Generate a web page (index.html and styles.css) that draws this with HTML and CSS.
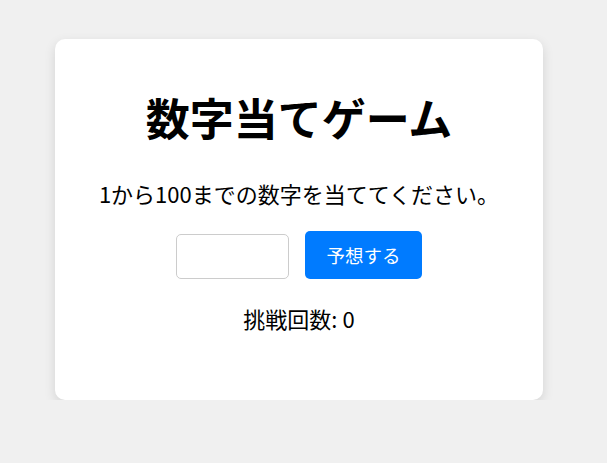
FILE: index.html
```html
<!DOCTYPE html>
<html lang="ja">
<head>
<meta charset="utf-8">
<title>数字当てゲーム</title>
<link rel="stylesheet" href="styles.css">
</head>
<body>
<div class="card">
  <h1 class="title">数字当てゲーム</h1>
  <p class="lead">1から100までの数字を当ててください。</p>
  <div class="form">
    <input class="guess" type="number">
    <button class="submit">予想する</button>
  </div>
  <p class="result"></p>
  <p class="count">挑戦回数: 0</p>
</div>
</body>
</html>
```
FILE: styles.css
```css
html, body {
  margin: 0;
  padding: 0;
}
body {
  background: #f0f0f0;
  font-family: "Noto Sans CJK JP", "Noto Sans", sans-serif;
  color: #000;
  padding: 39px 0 0 55px;
}
.card {
  box-sizing: border-box;
  width: 488px;
  height: 361px;
  background: #fff;
  border-radius: 10px;
  box-shadow: 0 4px 12px rgba(0, 0, 0, 0.12);
  padding: 20px;
  text-align: center;
}
.title {
  font-size: 44px;
  font-weight: 700;
  margin: 26px 0 28px;
}
.lead {
  font-size: 22px;
  margin: 0 0 22px;
}
.form {
  display: flex;
  justify-content: center;
  align-items: flex-end;
  gap: 16px;
}
.guess {
  box-sizing: border-box;
  width: 113px;
  height: 45px;
  border: 1px solid #ccc;
  border-radius: 5px;
  font-size: 18px;
  padding: 10px;
}
.submit {
  box-sizing: border-box;
  width: 117px;
  height: 48px;
  border: none;
  border-radius: 5px;
  background: #007bff;
  color: #fff;
  font-family: inherit;
  font-size: 18.5px;
}
.result {
  margin: 0;
}
.count {
  font-size: 22px;
  margin: 23px 0;
}
```
